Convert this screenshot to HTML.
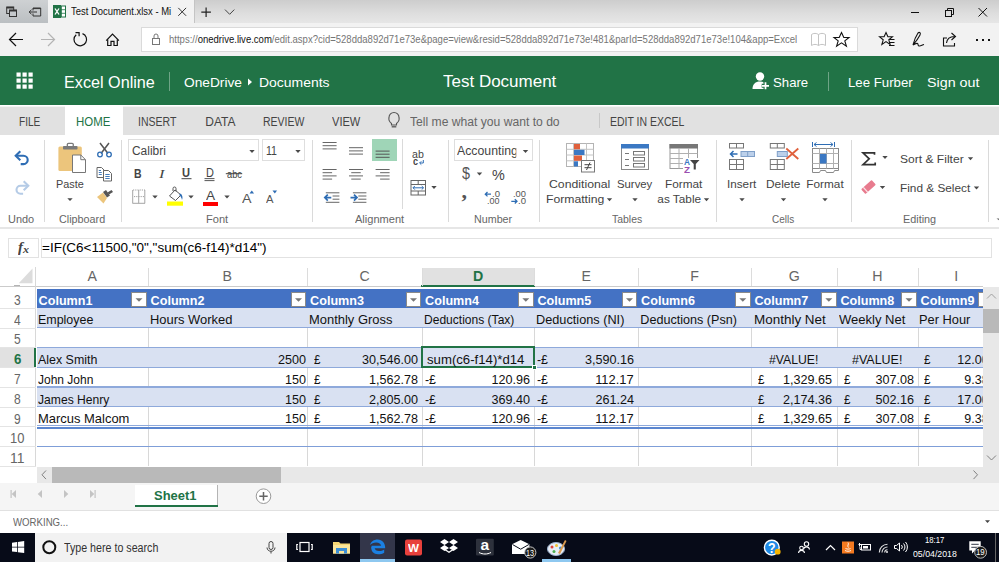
<!DOCTYPE html>
<html lang="en"><head><meta charset="utf-8"><title>Test Document.xlsx - Microsoft Excel Online</title>
<style>
html,body{margin:0;padding:0;background:#fff;}
body{width:999px;height:562px;overflow:hidden;position:relative;font-family:"Liberation Sans", "DejaVu Sans", sans-serif;}
#page{position:absolute;left:0;top:0;width:999px;height:562px;overflow:hidden;}
.b{position:absolute;box-sizing:border-box;}
.t{position:absolute;white-space:nowrap;line-height:1;transform-origin:0 0;display:block;}
svg.ov{position:absolute;left:0;top:0;width:999px;height:562px;overflow:visible;pointer-events:none;}
</style></head><body><div id="page">
<div class="b tabbar" style="left:0px;top:0px;width:999px;height:23.2px;background:linear-gradient(180deg,#cdcdcd,#dedede 60%,#e6e6e6);"></div>
<div class="b " style="left:0px;top:0px;width:47.5px;height:23.2px;background:linear-gradient(180deg,#ced1d3,#bbbfc2);"></div>
<div class="b tab" style="left:47.5px;top:0px;width:146px;height:23.2px;background:#f2f2f2;"></div>
<div class="b " style="left:193.5px;top:0px;width:1px;height:23.2px;background:#c4c4c4;"></div>
<div class="b navbar" style="left:0px;top:23px;width:999px;height:34px;background:#f2f2f2;"></div>
<div class="b urlbox" style="left:141px;top:27px;width:717px;height:25px;background:#fff;border:1px solid #dadada;"></div>
<div class="b appbar" style="left:0px;top:56.4px;width:999px;height:49.1px;background:#217346;"></div>
<div class="b " style="left:169.2px;top:72px;width:1px;height:19px;background:rgba(255,255,255,.35);"></div>
<div class="b " style="left:827.5px;top:72px;width:1px;height:19px;background:rgba(255,255,255,.35);"></div>
<div class="b " style="left:0px;top:105.5px;width:999px;height:1.5px;background:#f4f4f4;"></div>
<div class="b ribbontabs" style="left:0px;top:107px;width:999px;height:28px;background:#e1e1e1;"></div>
<div class="b hometab" style="left:65px;top:105.5px;width:58px;height:30px;background:#fff;"></div>
<div class="b " style="left:599px;top:113px;width:1px;height:15px;background:#c8c8c8;"></div>
<div class="b ribbon" style="left:0px;top:135px;width:999px;height:92px;background:#fff;"></div>
<div class="b " style="left:0px;top:227px;width:999px;height:5px;background:#fff;"></div>
<div class="b " style="left:0px;top:227.3px;width:999px;height:1.4px;background:#e6e6e6;"></div>
<div class="b " style="left:44px;top:140px;width:1px;height:82px;background:#dadada;"></div>
<div class="b " style="left:121px;top:140px;width:1px;height:82px;background:#dadada;"></div>
<div class="b " style="left:312px;top:140px;width:1px;height:82px;background:#dadada;"></div>
<div class="b " style="left:448px;top:140px;width:1px;height:82px;background:#dadada;"></div>
<div class="b " style="left:539px;top:140px;width:1px;height:82px;background:#dadada;"></div>
<div class="b " style="left:716px;top:140px;width:1px;height:82px;background:#dadada;"></div>
<div class="b " style="left:851px;top:140px;width:1px;height:82px;background:#dadada;"></div>
<div class="b " style="left:988px;top:140px;width:1px;height:82px;background:#dadada;"></div>
<div class="b " style="left:402px;top:139px;width:1px;height:70px;background:#dadada;"></div>
<div class="b " style="left:128px;top:139px;width:131px;height:22px;background:#fff;border:1px solid #dedede;"></div>
<div class="b " style="left:262px;top:139px;width:43px;height:22px;background:#fff;border:1px solid #dedede;"></div>
<div class="b " style="left:202.7px;top:201.7px;width:15.3px;height:4px;background:#ff0000;"></div>
<div class="b " style="left:372px;top:139px;width:25px;height:22px;background:#9fd5b7;"></div>
<div class="b " style="left:454px;top:139px;width:79px;height:22px;background:#fff;border:1px solid #dedede;overflow:hidden;"></div>
<div class="b " style="left:0px;top:232px;width:999px;height:35px;background:#fff;"></div>
<div class="b " style="left:8px;top:238px;width:31px;height:19.6px;background:#fff;border:1px solid #e2e2e2;"></div>
<div class="b " style="left:41px;top:238px;width:951px;height:19.6px;background:#fff;border:1px solid #e2e2e2;"></div>
<div class="b grid" style="left:0px;top:267px;width:983px;height:200px;background:#fff;"></div>
<div class="b " style="left:422px;top:267.8px;width:112.3px;height:18.2px;background:#e1e1e1;"></div>
<div class="b " style="left:0px;top:286px;width:983px;height:1px;background:#cbcbcb;"></div>
<div class="b " style="left:421px;top:285px;width:114px;height:2px;background:#217346;"></div>
<div class="b " style="left:148px;top:267.8px;width:1px;height:18.2px;background:#dcdcdc;"></div>
<div class="b " style="left:307px;top:267.8px;width:1px;height:18.2px;background:#dcdcdc;"></div>
<div class="b " style="left:422px;top:267.8px;width:1px;height:18.2px;background:#dcdcdc;"></div>
<div class="b " style="left:534px;top:267.8px;width:1px;height:18.2px;background:#dcdcdc;"></div>
<div class="b " style="left:638px;top:267.8px;width:1px;height:18.2px;background:#dcdcdc;"></div>
<div class="b " style="left:751px;top:267.8px;width:1px;height:18.2px;background:#dcdcdc;"></div>
<div class="b " style="left:837px;top:267.8px;width:1px;height:18.2px;background:#dcdcdc;"></div>
<div class="b " style="left:918px;top:267.8px;width:1px;height:18.2px;background:#dcdcdc;"></div>
<div class="b " style="left:35px;top:267px;width:1px;height:200px;background:#d8d8d8;"></div>
<div class="b " style="left:14px;top:284.6px;width:5.5px;height:1px;background:#b4b4b4;"></div>
<div class="b " style="left:37px;top:288.5px;width:946px;height:19.69999999999999px;background:#4472c4;"></div>
<div class="b " style="left:37px;top:308.2px;width:946px;height:19.80000000000001px;background:#d9e1f2;"></div>
<div class="b " style="left:37px;top:347.7px;width:946px;height:19.69999999999999px;background:#d9e1f2;"></div>
<div class="b " style="left:37px;top:387.2px;width:946px;height:19.80000000000001px;background:#d9e1f2;"></div>
<div class="b " style="left:147.5px;top:328px;width:1px;height:19.69999999999999px;background:#d8d8d8;"></div>
<div class="b " style="left:306.5px;top:328px;width:1px;height:19.69999999999999px;background:#d8d8d8;"></div>
<div class="b " style="left:421.5px;top:328px;width:1px;height:19.69999999999999px;background:#d8d8d8;"></div>
<div class="b " style="left:533.5px;top:328px;width:1px;height:19.69999999999999px;background:#d8d8d8;"></div>
<div class="b " style="left:637.5px;top:328px;width:1px;height:19.69999999999999px;background:#d8d8d8;"></div>
<div class="b " style="left:750.5px;top:328px;width:1px;height:19.69999999999999px;background:#d8d8d8;"></div>
<div class="b " style="left:836.5px;top:328px;width:1px;height:19.69999999999999px;background:#d8d8d8;"></div>
<div class="b " style="left:917.5px;top:328px;width:1px;height:19.69999999999999px;background:#d8d8d8;"></div>
<div class="b " style="left:147.5px;top:367.4px;width:1px;height:19.80000000000001px;background:#d8d8d8;"></div>
<div class="b " style="left:306.5px;top:367.4px;width:1px;height:19.80000000000001px;background:#d8d8d8;"></div>
<div class="b " style="left:421.5px;top:367.4px;width:1px;height:19.80000000000001px;background:#d8d8d8;"></div>
<div class="b " style="left:533.5px;top:367.4px;width:1px;height:19.80000000000001px;background:#d8d8d8;"></div>
<div class="b " style="left:637.5px;top:367.4px;width:1px;height:19.80000000000001px;background:#d8d8d8;"></div>
<div class="b " style="left:750.5px;top:367.4px;width:1px;height:19.80000000000001px;background:#d8d8d8;"></div>
<div class="b " style="left:836.5px;top:367.4px;width:1px;height:19.80000000000001px;background:#d8d8d8;"></div>
<div class="b " style="left:917.5px;top:367.4px;width:1px;height:19.80000000000001px;background:#d8d8d8;"></div>
<div class="b " style="left:147.5px;top:407px;width:1px;height:19.80000000000001px;background:#d8d8d8;"></div>
<div class="b " style="left:306.5px;top:407px;width:1px;height:19.80000000000001px;background:#d8d8d8;"></div>
<div class="b " style="left:421.5px;top:407px;width:1px;height:19.80000000000001px;background:#d8d8d8;"></div>
<div class="b " style="left:533.5px;top:407px;width:1px;height:19.80000000000001px;background:#d8d8d8;"></div>
<div class="b " style="left:637.5px;top:407px;width:1px;height:19.80000000000001px;background:#d8d8d8;"></div>
<div class="b " style="left:750.5px;top:407px;width:1px;height:19.80000000000001px;background:#d8d8d8;"></div>
<div class="b " style="left:836.5px;top:407px;width:1px;height:19.80000000000001px;background:#d8d8d8;"></div>
<div class="b " style="left:917.5px;top:407px;width:1px;height:19.80000000000001px;background:#d8d8d8;"></div>
<div class="b " style="left:147.5px;top:426.8px;width:1px;height:19.69999999999999px;background:#d8d8d8;"></div>
<div class="b " style="left:306.5px;top:426.8px;width:1px;height:19.69999999999999px;background:#d8d8d8;"></div>
<div class="b " style="left:421.5px;top:426.8px;width:1px;height:19.69999999999999px;background:#d8d8d8;"></div>
<div class="b " style="left:533.5px;top:426.8px;width:1px;height:19.69999999999999px;background:#d8d8d8;"></div>
<div class="b " style="left:637.5px;top:426.8px;width:1px;height:19.69999999999999px;background:#d8d8d8;"></div>
<div class="b " style="left:750.5px;top:426.8px;width:1px;height:19.69999999999999px;background:#d8d8d8;"></div>
<div class="b " style="left:836.5px;top:426.8px;width:1px;height:19.69999999999999px;background:#d8d8d8;"></div>
<div class="b " style="left:917.5px;top:426.8px;width:1px;height:19.69999999999999px;background:#d8d8d8;"></div>
<div class="b " style="left:147.5px;top:446.5px;width:1px;height:19.80000000000001px;background:#d8d8d8;"></div>
<div class="b " style="left:306.5px;top:446.5px;width:1px;height:19.80000000000001px;background:#d8d8d8;"></div>
<div class="b " style="left:421.5px;top:446.5px;width:1px;height:19.80000000000001px;background:#d8d8d8;"></div>
<div class="b " style="left:533.5px;top:446.5px;width:1px;height:19.80000000000001px;background:#d8d8d8;"></div>
<div class="b " style="left:637.5px;top:446.5px;width:1px;height:19.80000000000001px;background:#d8d8d8;"></div>
<div class="b " style="left:750.5px;top:446.5px;width:1px;height:19.80000000000001px;background:#d8d8d8;"></div>
<div class="b " style="left:836.5px;top:446.5px;width:1px;height:19.80000000000001px;background:#d8d8d8;"></div>
<div class="b " style="left:917.5px;top:446.5px;width:1px;height:19.80000000000001px;background:#d8d8d8;"></div>
<div class="b " style="left:37px;top:327.2px;width:946px;height:1.3px;background:#8ea9db;"></div>
<div class="b " style="left:37px;top:346.9px;width:946px;height:1.3px;background:#8ea9db;"></div>
<div class="b " style="left:37px;top:366.59999999999997px;width:946px;height:1.3px;background:#8ea9db;"></div>
<div class="b " style="left:37px;top:386.4px;width:946px;height:1.3px;background:#8ea9db;"></div>
<div class="b " style="left:37px;top:406.2px;width:946px;height:1.3px;background:#8ea9db;"></div>
<div class="b " style="left:37px;top:425.40000000000003px;width:946px;height:1px;background:#8ea9db;"></div>
<div class="b " style="left:37px;top:427.0px;width:946px;height:1.5px;background:#5b86cf;"></div>
<div class="b " style="left:37px;top:445.9px;width:946px;height:1.5px;background:#7f9ed8;"></div>
<div class="b " style="left:0px;top:347.7px;width:35.5px;height:19.69999999999999px;background:#e1e1e1;"></div>
<div class="b " style="left:34.4px;top:347.7px;width:2px;height:19.69999999999999px;background:#217346;"></div>
<div class="b " style="left:0px;top:307.7px;width:35.5px;height:1px;background:#e4e4e4;"></div>
<div class="b " style="left:0px;top:327.5px;width:35.5px;height:1px;background:#e4e4e4;"></div>
<div class="b " style="left:0px;top:347.2px;width:35.5px;height:1px;background:#e4e4e4;"></div>
<div class="b " style="left:0px;top:366.9px;width:35.5px;height:1px;background:#e4e4e4;"></div>
<div class="b " style="left:0px;top:386.7px;width:35.5px;height:1px;background:#e4e4e4;"></div>
<div class="b " style="left:0px;top:406.5px;width:35.5px;height:1px;background:#e4e4e4;"></div>
<div class="b " style="left:0px;top:426.3px;width:35.5px;height:1px;background:#e4e4e4;"></div>
<div class="b " style="left:0px;top:446.0px;width:35.5px;height:1px;background:#e4e4e4;"></div>
<div class="b " style="left:0px;top:465.8px;width:35.5px;height:1px;background:#e4e4e4;"></div>
<div class="b " style="left:131.2px;top:291.6px;width:15.6px;height:15.8px;background:#fff;border:1px solid #8a8a8a;"></div>
<div class="b " style="left:290.7px;top:291.6px;width:15.6px;height:15.8px;background:#fff;border:1px solid #8a8a8a;"></div>
<div class="b " style="left:405.7px;top:291.6px;width:15.6px;height:15.8px;background:#fff;border:1px solid #8a8a8a;"></div>
<div class="b " style="left:518.0px;top:291.6px;width:15.6px;height:15.8px;background:#fff;border:1px solid #8a8a8a;"></div>
<div class="b " style="left:621.7px;top:291.6px;width:15.6px;height:15.8px;background:#fff;border:1px solid #8a8a8a;"></div>
<div class="b " style="left:735.0px;top:291.6px;width:15.6px;height:15.8px;background:#fff;border:1px solid #8a8a8a;"></div>
<div class="b " style="left:821.0px;top:291.6px;width:15.6px;height:15.8px;background:#fff;border:1px solid #8a8a8a;"></div>
<div class="b " style="left:901.2px;top:291.6px;width:15.6px;height:15.8px;background:#fff;border:1px solid #8a8a8a;"></div>
<div class="b " style="left:978px;top:291.6px;width:5px;height:15.8px;background:#fff;border:1px solid #8a8a8a;border-right:none;"></div>
<div class="b " style="left:421px;top:346.2px;width:114.3px;height:22.099999999999987px;border:2px solid #217346;"></div>
<div class="b " style="left:532px;top:365.4px;width:5px;height:5px;background:#217346;border:1px solid #fff;"></div>
<div class="b " style="left:983px;top:286.8px;width:16px;height:180.2px;background:#e8e8e8;"></div>
<div class="b " style="left:983px;top:309px;width:16px;height:23.6px;background:#b9b9b9;"></div>
<div class="b " style="left:983px;top:267px;width:16px;height:20px;background:#fff;"></div>
<div class="b " style="left:0px;top:467px;width:999px;height:16px;background:#fff;"></div>
<div class="b " style="left:37px;top:467px;width:946px;height:15.7px;background:#e8e8e8;"></div>
<div class="b " style="left:52px;top:467px;width:229px;height:15.7px;background:#b9b9b9;"></div>
<div class="b " style="left:983px;top:467px;width:16px;height:15.7px;background:#e8e8e8;"></div>
<div class="b sheettabs" style="left:0px;top:482.7px;width:999px;height:28px;background:#f5f5f5;"></div>
<div class="b " style="left:0px;top:510px;width:999px;height:1px;background:#e1e1e1;"></div>
<div class="b " style="left:135px;top:485px;width:83px;height:22px;background:#fff;border-right:1px solid #b4b4b4;"></div>
<div class="b " style="left:135px;top:504.5px;width:83px;height:2.5px;background:#217346;"></div>
<div class="b status" style="left:0px;top:511px;width:999px;height:22px;background:#fff;"></div>
<div class="b taskbar" style="left:0px;top:532.8px;width:999px;height:29.2px;background:#070b18;"></div>
<div class="b " style="left:35px;top:532.8px;width:251.5px;height:29.2px;background:#f2f2f2;"></div>
<div class="b " style="left:360px;top:532.9px;width:35px;height:29.1px;background:#33364a;"></div>
<div class="b " style="left:360px;top:559.4px;width:35px;height:2.6px;background:#8ec8f0;"></div>
<div class="b " style="left:542px;top:559.4px;width:29px;height:2.6px;background:#8ec8f0;"></div>
<div class="b " style="left:995.3px;top:532.8px;width:1px;height:29.2px;background:#666;"></div>
<svg class="ov" viewBox="0 0 999 562" width="999" height="562">
<g fill="none" stroke="#333" stroke-width="1"><rect x="6.700" y="7" width="7" height="6.500"/><path d="M6.700 7.700h7" stroke-width="1.600"/><rect x="9.500" y="10" width="7" height="6.500" fill="#c4c8cb"/><path d="M9.500 10.700h7" stroke-width="1.600"/><path d="M33 10.500v-2.500h7.700v8h-7.700v-2.500M33 8.600h7.700" /><path d="M29 12h8M31.500 9.800l-2.400 2.200l2.400 2.200"/></g>
<g><rect x="58" y="6" width="7.5" height="11" fill="#fff" stroke="#217346" stroke-width="1"/><path d="M61.5 6v11M58 9.7h7.5M58 13.3h7.5" stroke="#217346" stroke-width=".8"/><rect x="53" y="5" width="8" height="13" fill="#217346"/><path d="M55 8.5l4 6M59 8.5l-4 6" stroke="#fff" stroke-width="1.3"/></g>
<path d="M178.300 7.900l7.800 7.900M186.100 7.900l-7.800 7.900" stroke="#333" stroke-width="1" fill="none"/>
<path d="M206.100 7.500v9.400M201.300 12.200h9.600" stroke="#222" stroke-width="1.200" fill="none"/>
<path d="M225 9.600l4.650 4.700l4.650-4.700" stroke="#444" stroke-width="1" fill="none"/>
<g stroke="#111" stroke-width="1" fill="none"><path d="M911 12.5h8"/><rect x="945.5" y="10.5" width="6" height="6"/><path d="M947.5 10.5v-2h6v6h-2"/><path d="M978.500 8l8.500 8.500M987 8l-8.500 8.500"/></g>
<g stroke="#111" stroke-width="1.2" fill="none"><path d="M23 39.500h-13.500M16 33l-6.500 6.500l6.500 6.500"/></g>
<g stroke="#b4b4b4" stroke-width="1.2" fill="none"><path d="M41 39.500h13.500M48 33l6.500 6.500l-6.500 6.500"/></g>
<g stroke="#111" stroke-width="1.2" fill="none"><path d="M82.500 33.600A6.300 6.300 0 1 1 76.200 34.700"/><path d="M75.500 32.700h3.600v3.600" /></g>
<g stroke="#111" stroke-width="1.2" fill="none"><path d="M106.200 40.700L112.500 34L118.900 40.700"/><path d="M107.700 39.500V45.500H111V41.300H114V45.500H117.300V39.500"/></g>
<g stroke="#777" stroke-width="1" fill="none"><rect x="152.500" y="38.500" width="7" height="6"/><path d="M154 38.500v-2.500a2 2 0 0 1 4 0v2.500"/></g>
<g stroke="#c4c4c4" stroke-width="1" fill="none"><path d="M818.500 34.500v11M818.500 34.500c-2-1.500-5-1.500-7 0v11c2-1.500 5-1.500 7 0c2-1.500 5-1.500 7 0v-11c-2-1.500-5-1.500-7 0"/></g>
<path d="M841.500 32.500l2.300 5h5.200l-4.200 3.400l1.600 5.300l-4.900-3.300l-4.900 3.300l1.600-5.300l-4.200-3.400h5.200z" stroke="#111" stroke-width="1.1" fill="none"/>
<g stroke="#111" stroke-width="1.1" fill="none"><path d="M886 32.500l1.900 4.300h4.500l-3.600 3l1.300 4.600l-4.100-2.800l-4.100 2.800l1.300-4.600l-3.600-3h4.500z"/><path d="M889 39.500h5.500M889 42.500h5.500M889 45.500h5.500" /></g>
<g stroke="#111" stroke-width="1.1" fill="none"><path d="M913 45c1-4 3-9 5-12c1.500-1.500 3 0 2 2c-1.500 3-4 6.500-7 10c2-1 3.500-2 4.500-1.500s0 2 1.500 2.500s3-1 5-1.500"/></g>
<g stroke="#111" stroke-width="1.1" fill="none"><path d="M947 38h-3.500v8h11v-3"/><path d="M946.500 43c.5-4 3.500-6.500 8-6.500M951.500 33l4 3.500l-4 3.500"/></g>
<g fill="#111"><rect x="976" y="39" width="2" height="2"/><rect x="982" y="39" width="2" height="2"/><rect x="988" y="39" width="2" height="2"/></g>
<g fill="#fff"><rect x="16.5" y="72.5" width="4.200" height="4.200"/><rect x="16.5" y="78.5" width="4.200" height="4.200"/><rect x="16.5" y="84.5" width="4.200" height="4.200"/><rect x="22.5" y="72.5" width="4.200" height="4.200"/><rect x="22.5" y="78.5" width="4.200" height="4.200"/><rect x="22.5" y="84.5" width="4.200" height="4.200"/><rect x="28.5" y="72.5" width="4.200" height="4.200"/><rect x="28.5" y="78.5" width="4.200" height="4.200"/><rect x="28.5" y="84.5" width="4.200" height="4.200"/></g>
<path d="M248 78.500l4 3.500l-4 3.500z" fill="#fff"/>
<g fill="#fff"><circle cx="760" cy="76.500" r="4.200"/><path d="M752.500 89c0-5 3-7.500 7.500-7.500c2 0 3.500.5 4.500 1.500v6z"/></g><g stroke="#217346" stroke-width="4" fill="none"><path d="M765.500 82v7.500M761.700 85.700h7.600"/></g><g stroke="#fff" stroke-width="1.700" fill="none"><path d="M765.500 82.300v7M762 85.800h7"/></g>
<g stroke="#555" stroke-width="1.1" fill="none"><path d="M391.500 123.500c-2.500-2-3-4-2.500-6a5 5 0 0 1 10 0c.5 2 0 4-2.500 6v1.500h-5z"/><path d="M391.700 126.800h4.600" stroke-width="1.300"/></g>
<g stroke="#2e6db4" stroke-width="2.100" fill="none"><path d="M17 155.700h6.500a4.200 4.200 0 0 1 0 8.400h-2.800"/><path d="M20.300 151.200l-4.600 4.500l4.600 4.500" stroke-linejoin="miter"/></g>
<g stroke="#b5cbe6" stroke-width="2.100" fill="none"><path d="M27 185.700h-6.500a4 4 0 0 0 0 8h2.600"/><path d="M23.700 181.200l4.600 4.500l-4.600 4.500"/></g>
<g><rect x="58.400" y="146.500" width="23.400" height="24.500" rx="1.500" fill="#ecc57c"/><rect x="63" y="146" width="14.500" height="3.500" rx=".8" fill="#7a7a7a"/><rect x="67.300" y="143.300" width="6" height="3.500" rx="1.200" fill="none" stroke="#7a7a7a" stroke-width="1.300"/><path d="M72.500 155h8.300l4.700 4.700v12.800h-13z" fill="#fff" stroke="#777" stroke-width="1"/><path d="M80.800 155v4.700h4.700" fill="none" stroke="#777" stroke-width="1"/></g>
<path d="M67.300 198.150h5.4l-2.700 2.9z" fill="#4a4a4a"/>
<g fill="none"><path d="M100 143l8 10.500M109 143l-8 10.500" stroke="#555" stroke-width="1.500"/><circle cx="100" cy="154.500" r="2.300" stroke="#2e6db4" stroke-width="1.300"/><circle cx="109" cy="154.500" r="2.300" stroke="#2e6db4" stroke-width="1.300"/></g>
<g fill="#fff" stroke="#666" stroke-width="1"><path d="M97 167.500h4.500l2.500 2.500v7.500h-7z"/><path d="M103.500 170.500h5l3 3v7.500h-8z"/></g><path d="M105.300 174.500h4.400M105.300 176.500h4.400M105.300 178.500h4.400M98.800 170.500h2.200M98.800 172.500h3M98.800 174.500h3" stroke="#2e6db4" stroke-width=".9"/>
<g><path d="M97 197l6-4.500l4 5.500l-3.500 5.500z" fill="#ecc57c"/><path d="M103 192l3-2l4 5.500l-3 2z" fill="#555"/><path d="M107.500 192.500l4-2.500l1.500 2l-4 2.500z" fill="#555"/></g>
<path d="M249.300 150.050h5.4l-2.700 2.9z" fill="#4a4a4a"/>
<path d="M295.300 150.050h5.4l-2.700 2.9z" fill="#4a4a4a"/>
<path d="M181.500 178.700h10" stroke="#444" stroke-width="1"/>
<path d="M204.500 178.600h10M204.500 180.600h10" stroke="#444" stroke-width=".9"/>
<path d="M225.800 173.700h16.400" stroke="#444" stroke-width="1"/>
<g fill="none"><path d="M132.500 203.300h12.500M132.700 190v13.300M144.800 190v13.300M138.700 190v13.300" stroke="#a6a6a6" stroke-width="1"/><path d="M133 190h12M134 196.600h10" stroke="#a0a0a0" stroke-width="1" stroke-dasharray="1.200 1"/></g>
<path d="M152.300 195.550h5.4l-2.700 2.9z" fill="#4a4a4a"/>
<g><rect x="167" y="201.500" width="16" height="4.200" fill="#ffff00"/><path d="M169.500 196l5.500-6l6 5l-5.500 5.500z" fill="#fff" stroke="#555" stroke-width="1"/><path d="M173 191v-2.500a1.500 1.500 0 0 1 3 0v3" fill="none" stroke="#555" stroke-width="1"/><path d="M180.500 193.500c2 1.500 2.500 4 1.500 6.500c-.5-2.500-1.500-4-3-5z" fill="#2e6db4"/></g>
<path d="M188.300 195.550h5.4l-2.700 2.9z" fill="#4a4a4a"/>
<path d="M224.300 195.550h5.4l-2.700 2.9z" fill="#4a4a4a"/>
<path d="M249.500 193.500l2.300-3l2.300 3z" fill="#2e6db4"/>
<path d="M272.500 190.500h4.600l-2.300 3z" fill="#2e6db4"/>
<path d="M322.60 142.50h14 M322.60 145.70h14 M322.60 148.90h14" stroke="#666" stroke-width="1" fill="none"/>
<path d="M349.00 147.70h14 M349.00 150.90h14 M349.00 154.10h14" stroke="#666" stroke-width="1" fill="none"/>
<path d="M375.60 151.10h14 M375.60 154.20h14 M375.60 157.30h14" stroke="#555" stroke-width="1" fill="none"/>
<path d="M322.60 169.50h14 M322.60 172.70h9.5 M322.60 175.90h14 M322.60 179.10h9.5" stroke="#666" stroke-width="1" fill="none"/>
<path d="M349.00 169.50h14 M351.25 172.70h9.5 M349.00 175.90h14 M351.25 179.10h9.5" stroke="#666" stroke-width="1" fill="none"/>
<path d="M375.60 169.50h14 M380.10 172.70h9.5 M375.60 175.90h14 M380.10 179.10h9.5" stroke="#666" stroke-width="1" fill="none"/>
<path d="M325.80 192.80h13.6 M332.60 196.00h6.8 M332.60 199.20h6.8 M325.80 202.30h13.6" stroke="#666" stroke-width="1" fill="none"/>
<g stroke="#2e6db4" stroke-width="1.700" fill="none"><path d="M324.800 197.600h6.500M327.800 194.600l-3 3l3 3"/></g>
<path d="M352.90 192.80h13.5 M358.30 196.00h8.1 M358.30 199.20h8.1 M352.90 202.30h13.5" stroke="#666" stroke-width="1" fill="none"/>
<g stroke="#2e6db4" stroke-width="1.700" fill="none"><path d="M350.500 197.600h6.500M354 194.600l3 3l-3 3"/></g>
<path d="M423.300 160v3h-3.500M421.300 161.300l-1.700 1.700l1.700 1.700" stroke="#2e6db4" stroke-width="1" fill="none"/>
<g fill="none" stroke="#666" stroke-width="1"><rect x="411" y="180.500" width="14.500" height="14.500" fill="#fff"/><path d="M411 184.500h14.500M411 191h14.500M418.200 180.500v4M418.200 191v4"/></g><path d="M413 187.800h10.500M414.800 186l-1.800 1.800l1.800 1.800M421.700 186l1.800 1.800l-1.800 1.800" stroke="#2e6db4" stroke-width="1" fill="none"/>
<path d="M431.300 186.050h5.4l-2.700 2.9z" fill="#4a4a4a"/>
<path d="M522.800 150.050h5.4l-2.700 2.9z" fill="#4a4a4a"/>
<path d="M476.800 172.550h5.4l-2.700 2.9z" fill="#4a4a4a"/>
<path d="M485.300 194.200h5.700M487.500 192l-2.200 2.200l2.200 2.200" stroke="#2e6db4" stroke-width="1.300" fill="none"/>
<path d="M511.300 201.300h5.700M514.800 199.100l2.200 2.200l-2.200 2.200" stroke="#2e6db4" stroke-width="1.300" fill="none"/>
<g><rect x="566.500" y="143.500" width="27" height="23" fill="#fff" stroke="#b4b4b4" stroke-width="1"/><path d="M566.500 149.300h27M566.500 155h27M566.500 160.800h27M573.500 143.500v23M586.500 143.500v23" stroke="#c4c4c4" stroke-width="1" fill="none"/><rect x="574" y="144" width="6" height="5.300" fill="#e0603c"/><rect x="574" y="149.800" width="10.500" height="5.200" fill="#3b78c3"/><rect x="574" y="155.500" width="8" height="5.300" fill="#e0603c"/><rect x="574" y="161.300" width="4" height="5.200" fill="#3b78c3"/><rect x="581.500" y="160.500" width="13" height="11.500" fill="#fff" stroke="#777" stroke-width="1"/><path d="M584.500 164.700h7M584.500 167.700h7M590 162.500l-3.500 7.500" stroke="#444" stroke-width="1" fill="none"/></g>
<path d="M606.800 198.350h5.4l-2.700 2.9z" fill="#4a4a4a"/>
<g><rect x="621.500" y="144.500" width="27" height="25" fill="#fff" stroke="#8a8a8a" stroke-width="1"/><rect x="621" y="144" width="28" height="4.500" fill="#3b78c3"/><path d="M625 153.500h4M625 159.500h4M625 165.500h4" stroke="#777" stroke-width="1"/><g fill="none" stroke="#777" stroke-width="1"><rect x="633.500" y="151.500" width="11" height="3.500"/><rect x="633.500" y="157.500" width="11" height="3.500"/><rect x="633.500" y="163.500" width="11" height="3.500"/></g></g>
<path d="M632.300 198.350h5.4l-2.700 2.9z" fill="#4a4a4a"/>
<g><rect x="670" y="144.500" width="27.500" height="24" fill="#fff" stroke="#9a9a9a" stroke-width="1"/><rect x="669.500" y="144" width="28.500" height="4.500" fill="#777"/><path d="M670 153.500h27.500M670 158.500h27.500M670 163.500h27.500M679 148v20.500M688.500 148v20.500" stroke="#b0b0b0" stroke-width="1" fill="none"/><rect x="683" y="158" width="16" height="15" fill="#fff"/><path d="M690 160h9.500l-3.700 4v5.500h-2.100v-5.500z" fill="#444"/></g>
<path d="M703.800 198.350h5.4l-2.700 2.9z" fill="#4a4a4a"/>
<g fill="#fff" stroke="#777" stroke-width="1"><rect x="729.500" y="143.500" width="14" height="4.500"/><path d="M736.500 143.500v4.500"/><rect x="729.500" y="159.500" width="14" height="10"/><path d="M736.500 159.500v10M729.500 164.500h14"/></g><rect x="741" y="151.500" width="13.500" height="5" fill="#bcd0ea" stroke="#7f9fc8" stroke-width="1"/><path d="M747.700 151.500v5" stroke="#7f9fc8" stroke-width="1"/><path d="M730.500 154h7M733.500 151l-3 3l3 3" stroke="#2e6db4" stroke-width="1.500" fill="none"/>
<path d="M739.300 198.350h5.4l-2.700 2.9z" fill="#4a4a4a"/>
<g transform="translate(0.8 0)"><g fill="#fff" stroke="#777" stroke-width="1"><rect x="769.500" y="143.500" width="14" height="4.500"/><path d="M776.500 143.500v4.500"/><rect x="769.500" y="159.500" width="14" height="10"/><path d="M776.500 159.500v10M769.500 164.500h14"/></g><rect x="776.500" y="151.500" width="10" height="5" fill="#bcd0ea" stroke="#7f9fc8" stroke-width="1"/><path d="M785.500 148.500l12 10.500M797.500 148.500l-12 10.500" stroke="#e0603c" stroke-width="1.800" fill="none"/></g>
<path d="M780.800 198.350h5.4l-2.700 2.9z" fill="#4a4a4a"/>
<g><rect x="812.500" y="148.500" width="26" height="20" fill="#fff" stroke="#8a8a8a" stroke-width="1"/><path d="M812.500 153.500h26M812.500 163.500h26M819.500 148.500v20M826.500 148.500v20M833.500 148.500v20" stroke="#b0b0b0" stroke-width="1" fill="none"/><rect x="820" y="154" width="6.500" height="9.500" fill="#3b78c3"/><path d="M812.500 168.500v4h7l1-2h5l1 2h0M826.500 172.500h7l1-2h4v-2" stroke="#8a8a8a" stroke-width="1" fill="none"/><path d="M812.500 142v5M834.500 142v5M814 144.500h19M816.500 142.500l-2.500 2l2.500 2M830.500 142.500l2.500 2l-2.500 2" stroke="#2e6db4" stroke-width="1" fill="none"/></g>
<path d="M822.300 198.350h5.4l-2.700 2.9z" fill="#4a4a4a"/>
<path d="M874.500 154.800v-2h-11.500l6.200 6l-6.200 5.800h12.200v-2" stroke="#333" stroke-width="1.700" fill="none"/>
<path d="M882.300 156.050h5.4l-2.700 2.9z" fill="#4a4a4a"/>
<path d="M967.800 157.350h5.4l-2.700 2.9z" fill="#4a4a4a"/>
<g transform="rotate(-42 868.500 187)"><rect x="861.500" y="183.800" width="14" height="6.400" rx=".8" fill="#e87b8e"/><rect x="863.800" y="183.800" width="1.300" height="6.400" fill="#fbe3e7"/></g>
<path d="M879.800 186.050h5.4l-2.700 2.9z" fill="#4a4a4a"/>
<path d="M973.800 186.550h5.4l-2.700 2.9z" fill="#4a4a4a"/>
<path d="M996.500 218.500h3v2z" fill="#666"/>
<path d="M18.700 283.200l13.800-14.600v14.600z" fill="#dcdcdc"/>
<path d="M135.50 298.200h7l-3.500 3.600z" fill="#777"/>
<path d="M295.00 298.200h7l-3.500 3.600z" fill="#777"/>
<path d="M410.00 298.200h7l-3.500 3.600z" fill="#777"/>
<path d="M522.30 298.200h7l-3.500 3.600z" fill="#777"/>
<path d="M626.00 298.200h7l-3.500 3.600z" fill="#777"/>
<path d="M739.30 298.200h7l-3.500 3.600z" fill="#777"/>
<path d="M825.30 298.200h7l-3.500 3.600z" fill="#777"/>
<path d="M905.50 298.200h7l-3.500 3.600z" fill="#777"/>
<path d="M987 298.500l4.500-4.500l4.500 4.500" stroke="#a0a0a0" stroke-width="1" fill="none"/>
<path d="M987 455.500l4.500 4.500l4.500-4.500" stroke="#808080" stroke-width="1" fill="none"/>
<path d="M46 470.500l-4 4.300l4 4.300" stroke="#808080" stroke-width="1" fill="none"/>
<path d="M973.500 470.500l4 4.300l-4 4.300" stroke="#808080" stroke-width="1" fill="none"/>
<g fill="#c4c4c4"><rect x="10.500" y="490" width="1.200" height="8"/><path d="M16 490v8l-4.300-4z"/><path d="M42 490v8l-4.300-4z"/><path d="M64 490v8l4.300-4z"/><path d="M90 490v8l4.300-4z"/><rect x="94.500" y="490" width="1.200" height="8"/></g>
<g fill="none"><circle cx="263.500" cy="496.200" r="7.300" stroke-width="1" stroke="#999" fill="#fff"/><path d="M259.300 496.200h8.400M263.500 492v8.400" stroke-width="1.500" stroke="#666"/></g>
<path d="M985 520.300h5l-2.500 2.800z" fill="#444"/>
<g fill="#fff"><path d="M12 542.800l5-.7v4.600h-5zM17.800 542l6.400-.9v5.600h-6.400zM12 547.500h5v4.600l-5-.7zM17.800 547.500h6.400v5.600l-6.400-.9z"/></g>
<circle cx="49.300" cy="547.300" r="6" stroke="#111" stroke-width="2" fill="none"/>
<g stroke="#444" stroke-width="1" fill="none"><rect x="269" y="541.500" width="4" height="8" rx="2"/><path d="M267 547.500c0 5 8 5 8 0M271 551.500v2"/></g>
<g stroke="#fff" stroke-width="1.200" fill="none"><rect x="300" y="542.500" width="9" height="9"/><path d="M298 544.500h-1.200v5h1.200M311 544.500h1.200v5h-1.200"/></g>
<g><path d="M333 542h6l1.500 1.500h9.500v10h-17z" fill="#f7d774"/><rect x="333" y="545" width="17" height="8.500" fill="#fbe69b"/><rect x="336" y="548" width="11" height="5.500" fill="#3c8fd6"/><rect x="339" y="551" width="5" height="2.500" fill="#fbe69b"/></g>
<g fill="#1b80e2"><path d="M371.300 548.300h13.900c.2-5.200-2.900-8.900-7.600-8.900c-3.700 0-6.700 2.100-7.700 5.700c1.600-1.700 3.700-2.700 6.200-2.700c3 0 4.700 1.400 5 3.400h-9.500z"/><path d="M371.300 547.300c-.3 4 2.400 6.900 6.700 6.900c2.500 0 4.600-.5 6.200-1.500v-3.100c-1.600 1-3.200 1.500-5.200 1.500c-2.600 0-4.200-1.300-4.400-3.300z"/></g>
<rect x="405" y="539.500" width="17" height="16" rx="2" fill="#e8413c"/>
<g fill="#fff"><path d="M444.500 539l4.500 3l-4.500 3l-4.500-3zM453.500 539l4.500 3l-4.500 3l-4.500-3zM444.500 545l4.500 3l-4.500 3l-4.500-3zM453.500 545l4.500 3l-4.500 3l-4.500-3zM449 551.500l4.500-3v1.500l-4.500 3l-4.500-3v-1.500z"/></g>
<rect x="476" y="538.800" width="17.800" height="16.800" rx="1" fill="#2d313c"/><path d="M479 552.500c4 2 8 2 12 0" stroke="#fff" stroke-width="1" fill="none"/>
<g><path d="M512 544.300l8.700-4.300l8.700 4.300v9.700h-17.400z" fill="#fff"/><path d="M512.500 544.500l8.200 4.700l8.200-4.700" stroke="#070b18" stroke-width="1" fill="none"/><circle cx="530.300" cy="552.500" r="5.600" fill="#1c1c1c" stroke="#c8c8c8" stroke-width="1"/></g>
<g><ellipse cx="556" cy="549" rx="8.500" ry="6.500" fill="#e8eef6" stroke="#9fb6d4" stroke-width="1"/><circle cx="552" cy="547" r="1.500" fill="#e0443c"/><circle cx="556.500" cy="545.500" r="1.500" fill="#f1c232"/><circle cx="560.500" cy="548" r="1.500" fill="#3c8fd6"/><circle cx="554" cy="551.500" r="1.500" fill="#4caf50"/><path d="M558 553l7-13l1.500 1l-6.500 13z" fill="#d99a4e"/></g>
<g><circle cx="771.800" cy="547.600" r="7.400" fill="#1e8ae6" stroke="#fff" stroke-width="1.400"/><circle cx="777.700" cy="551.700" r="2.900" fill="#f5b400"/></g>
<g stroke="#fff" stroke-width="1.100" fill="none"><circle cx="806.500" cy="544" r="2.200"/><path d="M803.500 549.500c.5-3.500 5.500-3.500 6 0"/><circle cx="801.500" cy="548" r="1.800"/><path d="M798.500 553c.5-3.500 5.500-3.500 6 0"/></g>
<path d="M826 550l4.500-4.500l4.500 4.500" stroke="#fff" stroke-width="1.200" fill="none"/>
<rect x="842" y="541.500" width="12" height="12" fill="#f47a20"/><path d="M845 550.500c2 1 4 1 6 0M845.500 548.500c2 .8 3.500.8 5 0M848 542.500c1.500 2-1.500 3 .5 5" stroke="#fff" stroke-width=".9" fill="none"/>
<g stroke="#fff" stroke-width="1" fill="none"><rect x="861.500" y="544.500" width="9" height="5.500"/><rect x="863" y="546" width="5" height="2.500" fill="#fff" stroke="none"/><path d="M859.500 543v3.500M858.500 544.500h3M860 547v2.500h1.500"/></g>
<g stroke="#ededed" stroke-width="1.100" fill="none"><path d="M884.700 552.500a2.800 2.800 0 0 1 2.800-2.800M882 552.500a5.500 5.500 0 0 1 5.500-5.500M879.300 552.500a8.200 8.200 0 0 1 8.200-8.200" opacity=".95"/><circle cx="887" cy="552" r=".9" fill="#fff" stroke="none"/></g>
<g stroke="#fff" stroke-width="1" fill="none"><path d="M894.500 545.500h2l3-2.500v8l-3-2.500h-2z"/><path d="M901.500 545a3 3 0 0 1 0 4M903.500 543.500a5 5 0 0 1 0 7M905.500 542a7.500 7.500 0 0 1 0 10"/></g>
<g><path d="M969.300 541.300h11.400v9.200h-5.700l-3 3v-3h-2.700z" fill="#fff"/><path d="M971.300 544.300h7.400M971.300 547.300h7.400" stroke="#5a5f6b" stroke-width="1.200"/><circle cx="980.600" cy="552.300" r="5.900" fill="#1c1c1c" stroke="#bdbdbd" stroke-width="1"/></g>
</svg>
<span class="t" style="top:7.00px;font-size:10.1px;color:#111;left:71.44px;transform:scaleX(0.9344);">Test Document.xlsx - Mi</span>
<span class="t" style="top:34.00px;font-size:11px;color:#767676;left:169.40px;transform:scaleX(0.8671);"><span style="color:#767676">https://</span><span style="color:#111">onedrive.live.com</span><span style="color:#767676">/edit.aspx?cid=528dda892d71e73e&amp;page=view&amp;resid=528dda892d71e73e!481&amp;parId=528dda892d71e73e!104&amp;app=Excel</span></span>
<span class="t" style="top:75.00px;font-size:16.8px;color:#fff;left:64.08px;transform:scaleX(0.9642);">Excel Online</span>
<span class="t" style="top:76.00px;font-size:13.6px;color:#fff;left:184.25px;transform:scaleX(1.0100);">OneDrive</span>
<span class="t" style="top:76.00px;font-size:13.6px;color:#fff;left:259.25px;transform:scaleX(1.0252);">Documents</span>
<span class="t" style="top:74.00px;font-size:16.8px;color:#fff;left:443.08px;transform:scaleX(1.0127);">Test Document</span>
<span class="t" style="top:76.00px;font-size:13.6px;color:#fff;left:772.55px;transform:scaleX(0.9701);">Share</span>
<span class="t" style="top:76.00px;font-size:13.6px;color:#fff;left:848.05px;transform:scaleX(0.9729);">Lee Furber</span>
<span class="t" style="top:76.00px;font-size:13.6px;color:#fff;left:927.25px;transform:scaleX(1.0522);">Sign out</span>
<span class="t" style="top:116.00px;font-size:12px;color:#444;left:19.34px;transform:scaleX(0.8412);">FILE</span>
<span class="t" style="top:116.00px;font-size:12px;color:#217346;left:76.34px;transform:scaleX(0.9533);">HOME</span>
<span class="t" style="top:116.00px;font-size:12px;color:#444;left:138.34px;transform:scaleX(0.8749);">INSERT</span>
<span class="t" style="top:116.00px;font-size:12px;color:#444;left:205.34px;">DATA</span>
<span class="t" style="top:116.00px;font-size:12px;color:#444;left:263.34px;transform:scaleX(0.8728);">REVIEW</span>
<span class="t" style="top:116.00px;font-size:12px;color:#444;left:332.34px;transform:scaleX(0.9233);">VIEW</span>
<span class="t" style="top:116.00px;font-size:12px;color:#444;left:610.34px;transform:scaleX(0.8729);">EDIT IN EXCEL</span>
<span class="t" style="top:116.00px;font-size:12px;color:#666;left:409.74px;transform:scaleX(1.0104);">Tell me what you want to do</span>
<span class="t" style="top:214.00px;font-size:10.6px;color:#666;left:8.42px;transform:scaleX(1.0331);">Undo</span>
<span class="t" style="top:214.00px;font-size:10.6px;color:#666;left:59.42px;transform:scaleX(1.0178);">Clipboard</span>
<span class="t" style="top:214.00px;font-size:10.6px;color:#666;left:205.82px;transform:scaleX(1.0454);">Font</span>
<span class="t" style="top:214.00px;font-size:10.6px;color:#666;left:355.42px;transform:scaleX(1.0437);">Alignment</span>
<span class="t" style="top:214.00px;font-size:10.6px;color:#666;left:474.42px;transform:scaleX(1.0127);">Number</span>
<span class="t" style="top:214.00px;font-size:10.6px;color:#666;left:612.42px;transform:scaleX(0.9850);">Tables</span>
<span class="t" style="top:214.00px;font-size:10.6px;color:#666;left:772.42px;transform:scaleX(0.9414);">Cells</span>
<span class="t" style="top:214.00px;font-size:10.6px;color:#666;left:903.42px;transform:scaleX(1.0234);">Editing</span>
<span class="t" style="top:179.00px;font-size:11.8px;color:#444;left:55.85px;transform:scaleX(0.9213);">Paste</span>
<span class="t" style="top:145.00px;font-size:12px;color:#444;left:131.84px;transform:scaleX(0.9942);">Calibri</span>
<span class="t" style="top:145.00px;font-size:12px;color:#444;left:266.00px;transform:scaleX(0.8822);">11</span>
<span class="t" style="top:168.00px;font-size:12.6px;color:#444;font-weight:700;left:134.40px;transform:scaleX(0.8343);">B</span>
<span class="t" style="top:167.00px;font-size:13px;color:#444;font-family:'Liberation Serif', 'DejaVu Serif', serif;font-style:italic;left:159.00px;transform:scaleX(1.2662);">I</span>
<span class="t" style="top:167.00px;font-size:12px;color:#444;font-weight:700;left:182.40px;transform:scaleX(0.9225);">U</span>
<span class="t" style="top:167.00px;font-size:12px;color:#444;left:205.60px;transform:scaleX(0.9110);">D</span>
<span class="t" style="top:169.00px;font-size:11px;color:#444;left:226.50px;transform:scaleX(0.8451);">abc</span>
<span class="t" style="top:190.00px;font-size:12.6px;color:#444;left:205.80px;transform:scaleX(1.0825);">A</span>
<span class="t" style="top:192.00px;font-size:13.5px;color:#555;left:241.50px;transform:scaleX(1.0537);">A</span>
<span class="t" style="top:194.00px;font-size:11.5px;color:#555;left:265.50px;transform:scaleX(0.9776);">A</span>
<span class="t" style="top:149.00px;font-size:11.5px;color:#444;left:412.20px;transform:scaleX(0.9221);">ab</span>
<span class="t" style="top:156.00px;font-size:11.5px;color:#444;font-weight:700;left:412.60px;transform:scaleX(0.7805);">c</span>
<span class="t" style="top:145.00px;font-size:12px;color:#444;left:457.34px;transform:scaleX(1.0243);clip-path:inset(-5px 1.5px -5px 0);">Accounting</span>
<span class="t" style="top:165.00px;font-size:17px;color:#555;left:461.50px;transform:scaleX(0.8449);">$</span>
<span class="t" style="top:167.00px;font-size:15px;color:#444;left:491.80px;transform:scaleX(0.9593);">%</span>
<span class="t" style="top:180.00px;font-size:22px;color:#555;font-weight:700;font-family:'Liberation Serif', 'DejaVu Serif', serif;left:461.50px;">,</span>
<span class="t" style="top:190.00px;font-size:8.5px;color:#555;left:491.50px;transform:scaleX(1.1278);">.0</span>
<span class="t" style="top:197.00px;font-size:8.5px;color:#555;left:487.00px;transform:scaleX(1.0568);">.00</span>
<span class="t" style="top:190.00px;font-size:8.5px;color:#555;left:512.50px;transform:scaleX(1.0991);">.00</span>
<span class="t" style="top:197.00px;font-size:8.5px;color:#555;left:517.50px;transform:scaleX(1.1278);">.0</span>
<span class="t" style="top:179.00px;font-size:11.8px;color:#444;left:548.95px;transform:scaleX(1.0384);">Conditional</span>
<span class="t" style="top:194.00px;font-size:11.8px;color:#444;left:546.35px;transform:scaleX(1.0338);">Formatting</span>
<span class="t" style="top:179.00px;font-size:11.8px;color:#444;left:617.35px;transform:scaleX(0.9613);">Survey</span>
<span class="t" style="top:158.00px;font-size:8.5px;color:#3b78c3;font-weight:700;left:684.00px;transform:scaleX(0.9771);">A</span>
<span class="t" style="top:166.00px;font-size:8.5px;color:#9b4fb0;font-weight:700;left:684.00px;transform:scaleX(1.1532);">Z</span>
<span class="t" style="top:179.00px;font-size:11.8px;color:#444;left:664.95px;">Format</span>
<span class="t" style="top:194.00px;font-size:11.8px;color:#444;left:657.35px;">as Table</span>
<span class="t" style="top:179.00px;font-size:11.8px;color:#444;left:727.35px;transform:scaleX(0.9926);">Insert</span>
<span class="t" style="top:179.00px;font-size:11.8px;color:#444;left:766.35px;transform:scaleX(1.0055);">Delete</span>
<span class="t" style="top:179.00px;font-size:11.8px;color:#444;left:806.35px;">Format</span>
<span class="t" style="top:154.00px;font-size:11.5px;color:#444;left:899.97px;transform:scaleX(1.0485);">Sort &amp; Filter</span>
<span class="t" style="top:183.00px;font-size:11.5px;color:#444;left:899.97px;transform:scaleX(1.0272);">Find &amp; Select</span>
<span class="t" style="top:241.00px;font-size:14px;color:#444;font-weight:700;font-family:'Liberation Serif', 'DejaVu Serif', serif;font-style:italic;left:17.50px;transform:scaleX(1.0702);">f</span>
<span class="t" style="top:245.00px;font-size:10px;color:#444;font-weight:700;font-family:'Liberation Serif', 'DejaVu Serif', serif;font-style:italic;left:22.50px;transform:scaleX(1.2000);">x</span>
<span class="t" style="top:241.00px;font-size:13.2px;color:#000;left:42.27px;transform:scaleX(1.0234);">=IF(C6&lt;11500,&quot;0&quot;,&quot;sum(c6-f14)*d14&quot;)</span>
<span class="t" style="top:269.00px;font-size:14.2px;color:#666;left:42.25px;width:100px;text-align:center;transform-origin:50% 0;">A</span>
<span class="t" style="top:269.00px;font-size:14.2px;color:#666;left:177.25px;width:100px;text-align:center;transform-origin:50% 0;">B</span>
<span class="t" style="top:269.00px;font-size:14.2px;color:#666;left:314.50px;width:100px;text-align:center;transform-origin:50% 0;">C</span>
<span class="t" style="top:269.00px;font-size:14.2px;color:#217346;font-weight:700;left:428.15px;width:100px;text-align:center;transform-origin:50% 0;">D</span>
<span class="t" style="top:269.00px;font-size:14.2px;color:#666;left:536.15px;width:100px;text-align:center;transform-origin:50% 0;">E</span>
<span class="t" style="top:269.00px;font-size:14.2px;color:#666;left:644.65px;width:100px;text-align:center;transform-origin:50% 0;">F</span>
<span class="t" style="top:269.00px;font-size:14.2px;color:#666;left:744.30px;width:100px;text-align:center;transform-origin:50% 0;">G</span>
<span class="t" style="top:269.00px;font-size:14.2px;color:#666;left:827.40px;width:100px;text-align:center;transform-origin:50% 0;">H</span>
<span class="t" style="top:269.00px;font-size:14.2px;color:#666;left:906.30px;width:100px;text-align:center;transform-origin:50% 0;">I</span>
<span class="t" style="top:293.00px;font-size:14.2px;color:#666;left:13.85px;transform:scaleX(0.8491);">3</span>
<span class="t" style="top:313.00px;font-size:14.2px;color:#666;left:13.85px;transform:scaleX(0.8491);">4</span>
<span class="t" style="top:332.00px;font-size:14.2px;color:#666;left:13.85px;transform:scaleX(0.8491);">5</span>
<span class="t" style="top:352.00px;font-size:14.2px;color:#217346;font-weight:700;left:13.50px;transform:scaleX(0.9378);">6</span>
<span class="t" style="top:372.00px;font-size:14.2px;color:#666;left:13.85px;transform:scaleX(0.8491);">7</span>
<span class="t" style="top:392.00px;font-size:14.2px;color:#666;left:13.85px;transform:scaleX(0.8491);">8</span>
<span class="t" style="top:412.00px;font-size:14.2px;color:#666;left:13.85px;transform:scaleX(0.8491);">9</span>
<span class="t" style="top:431.00px;font-size:14.2px;color:#666;left:10.00px;transform:scaleX(0.9125);">10</span>
<span class="t" style="top:451.00px;font-size:14.2px;color:#666;left:10.00px;transform:scaleX(0.9773);">11</span>
<span class="t" style="top:295.00px;font-size:12.6px;color:#fff;font-weight:700;left:38.61px;">Column1</span>
<span class="t" style="top:295.00px;font-size:12.6px;color:#fff;font-weight:700;left:150.61px;">Column2</span>
<span class="t" style="top:295.00px;font-size:12.6px;color:#fff;font-weight:700;left:310.11px;">Column3</span>
<span class="t" style="top:295.00px;font-size:12.6px;color:#fff;font-weight:700;left:425.11px;">Column4</span>
<span class="t" style="top:295.00px;font-size:12.6px;color:#fff;font-weight:700;left:537.41px;">Column5</span>
<span class="t" style="top:295.00px;font-size:12.6px;color:#fff;font-weight:700;left:641.11px;">Column6</span>
<span class="t" style="top:295.00px;font-size:12.6px;color:#fff;font-weight:700;left:754.41px;">Column7</span>
<span class="t" style="top:295.00px;font-size:12.6px;color:#fff;font-weight:700;left:840.41px;">Column8</span>
<span class="t" style="top:295.00px;font-size:12.6px;color:#fff;font-weight:700;left:920.61px;">Column9</span>
<span class="t" style="top:314.00px;font-size:12.6px;color:#111;left:38.31px;transform:scaleX(0.9888);">Employee</span>
<span class="t" style="top:314.00px;font-size:12.6px;color:#111;left:150.31px;transform:scaleX(1.0264);">Hours Worked</span>
<span class="t" style="top:314.00px;font-size:12.6px;color:#111;left:309.31px;transform:scaleX(1.0271);">Monthly Gross</span>
<span class="t" style="top:314.00px;font-size:12.6px;color:#111;left:424.31px;transform:scaleX(0.9565);">Deductions (Tax)</span>
<span class="t" style="top:314.00px;font-size:12.6px;color:#111;left:536.31px;transform:scaleX(1.0101);">Deductions (NI)</span>
<span class="t" style="top:314.00px;font-size:12.6px;color:#111;left:640.31px;">Deductions (Psn)</span>
<span class="t" style="top:314.00px;font-size:12.6px;color:#111;left:753.91px;transform:scaleX(1.0682);">Monthly Net</span>
<span class="t" style="top:314.00px;font-size:12.6px;color:#111;left:839.31px;transform:scaleX(1.0348);">Weekly Net</span>
<span class="t" style="top:314.00px;font-size:12.6px;color:#111;left:919.31px;transform:scaleX(1.0194);">Per Hour</span>
<span class="t" style="top:354.00px;font-size:12.6px;color:#111;left:38.31px;transform:scaleX(0.9864);">Alex Smith</span>
<span class="t" style="top:374.00px;font-size:12.6px;color:#111;left:38.31px;transform:scaleX(0.9529);">John John</span>
<span class="t" style="top:394.00px;font-size:12.6px;color:#111;left:38.31px;transform:scaleX(0.9622);">James Henry</span>
<span class="t" style="top:413.00px;font-size:12.6px;color:#111;left:38.31px;transform:scaleX(1.0283);">Marcus Malcom</span>
<span class="t" style="top:354.00px;font-size:12.6px;color:#111;right:693.10px;transform-origin:100% 0;">2500</span>
<span class="t" style="top:354.00px;font-size:12.6px;color:#111;left:313.50px;transform:scaleX(0.9265);">£</span>
<span class="t" style="top:354.00px;font-size:12.6px;color:#111;right:581.10px;transform-origin:100% 0;">30,546.00</span>
<span class="t" style="top:354.00px;font-size:12.6px;color:#111;left:427.31px;transform:scaleX(1.0459);">sum(c6-f14)*d14</span>
<span class="t" style="top:354.00px;font-size:12.6px;color:#111;left:537.00px;transform:scaleX(0.9819);">-£</span>
<span class="t" style="top:354.00px;font-size:12.6px;color:#111;right:365.10px;transform-origin:100% 0;">3,590.16</span>
<span class="t" style="top:354.00px;font-size:12.6px;color:#111;left:769.31px;transform:scaleX(0.9707);">#VALUE!</span>
<span class="t" style="top:354.00px;font-size:12.6px;color:#111;left:852.31px;transform:scaleX(0.9904);">#VALUE!</span>
<span class="t" style="top:374.00px;font-size:12.6px;color:#111;right:693.10px;transform-origin:100% 0;">150</span>
<span class="t" style="top:374.00px;font-size:12.6px;color:#111;left:313.50px;transform:scaleX(0.9265);">£</span>
<span class="t" style="top:374.00px;font-size:12.6px;color:#111;right:581.10px;transform-origin:100% 0;">1,562.78</span>
<span class="t" style="top:374.00px;font-size:12.6px;color:#111;left:425.00px;transform:scaleX(0.9819);">-£</span>
<span class="t" style="top:374.00px;font-size:12.6px;color:#111;right:469.10px;transform-origin:100% 0;">120.96</span>
<span class="t" style="top:374.00px;font-size:12.6px;color:#111;left:537.00px;transform:scaleX(0.9819);">-£</span>
<span class="t" style="top:374.00px;font-size:12.6px;color:#111;right:365.10px;transform-origin:100% 0;transform:scaleX(1.0228);">112.17</span>
<span class="t" style="top:374.00px;font-size:12.6px;color:#111;left:758.00px;transform:scaleX(0.9265);">£</span>
<span class="t" style="top:374.00px;font-size:12.6px;color:#111;right:167.10px;transform-origin:100% 0;">1,329.65</span>
<span class="t" style="top:374.00px;font-size:12.6px;color:#111;left:843.50px;transform:scaleX(0.9265);">£</span>
<span class="t" style="top:374.00px;font-size:12.6px;color:#111;right:85.10px;transform-origin:100% 0;">307.08</span>
<span class="t" style="top:394.00px;font-size:12.6px;color:#111;right:693.10px;transform-origin:100% 0;">150</span>
<span class="t" style="top:394.00px;font-size:12.6px;color:#111;left:313.50px;transform:scaleX(0.9265);">£</span>
<span class="t" style="top:394.00px;font-size:12.6px;color:#111;right:581.10px;transform-origin:100% 0;">2,805.00</span>
<span class="t" style="top:394.00px;font-size:12.6px;color:#111;left:425.00px;transform:scaleX(0.9819);">-£</span>
<span class="t" style="top:394.00px;font-size:12.6px;color:#111;right:469.10px;transform-origin:100% 0;">369.40</span>
<span class="t" style="top:394.00px;font-size:12.6px;color:#111;left:537.00px;transform:scaleX(0.9819);">-£</span>
<span class="t" style="top:394.00px;font-size:12.6px;color:#111;right:365.10px;transform-origin:100% 0;">261.24</span>
<span class="t" style="top:394.00px;font-size:12.6px;color:#111;left:758.00px;transform:scaleX(0.9265);">£</span>
<span class="t" style="top:394.00px;font-size:12.6px;color:#111;right:167.10px;transform-origin:100% 0;">2,174.36</span>
<span class="t" style="top:394.00px;font-size:12.6px;color:#111;left:843.50px;transform:scaleX(0.9265);">£</span>
<span class="t" style="top:394.00px;font-size:12.6px;color:#111;right:85.10px;transform-origin:100% 0;">502.16</span>
<span class="t" style="top:413.00px;font-size:12.6px;color:#111;right:693.10px;transform-origin:100% 0;">150</span>
<span class="t" style="top:413.00px;font-size:12.6px;color:#111;left:313.50px;transform:scaleX(0.9265);">£</span>
<span class="t" style="top:413.00px;font-size:12.6px;color:#111;right:581.10px;transform-origin:100% 0;">1,562.78</span>
<span class="t" style="top:413.00px;font-size:12.6px;color:#111;left:425.00px;transform:scaleX(0.9819);">-£</span>
<span class="t" style="top:413.00px;font-size:12.6px;color:#111;right:469.10px;transform-origin:100% 0;">120.96</span>
<span class="t" style="top:413.00px;font-size:12.6px;color:#111;left:537.00px;transform:scaleX(0.9819);">-£</span>
<span class="t" style="top:413.00px;font-size:12.6px;color:#111;right:365.10px;transform-origin:100% 0;transform:scaleX(1.0228);">112.17</span>
<span class="t" style="top:413.00px;font-size:12.6px;color:#111;left:758.00px;transform:scaleX(0.9265);">£</span>
<span class="t" style="top:413.00px;font-size:12.6px;color:#111;right:167.10px;transform-origin:100% 0;">1,329.65</span>
<span class="t" style="top:413.00px;font-size:12.6px;color:#111;left:843.50px;transform:scaleX(0.9265);">£</span>
<span class="t" style="top:413.00px;font-size:12.6px;color:#111;right:85.10px;transform-origin:100% 0;">307.08</span>
<span class="t" style="top:354.00px;font-size:12.6px;color:#111;left:923.50px;transform:scaleX(0.9265);">£</span>
<span class="t" style="top:374.00px;font-size:12.6px;color:#111;left:923.50px;transform:scaleX(0.9265);">£</span>
<span class="t" style="top:394.00px;font-size:12.6px;color:#111;left:923.50px;transform:scaleX(0.9265);">£</span>
<span class="t" style="top:413.00px;font-size:12.6px;color:#111;left:923.50px;transform:scaleX(0.9265);">£</span>
<span class="t" style="top:354.00px;font-size:12.6px;color:#111;right:10.00px;transform-origin:100% 0;transform:scaleX(0.9890);clip-path:inset(-3px 6px -3px -3px);">12.00</span>
<span class="t" style="top:374.00px;font-size:12.6px;color:#111;right:10.00px;transform-origin:100% 0;transform:scaleX(0.9888);clip-path:inset(-3px 6px -3px -3px);">9.38</span>
<span class="t" style="top:394.00px;font-size:12.6px;color:#111;right:10.00px;transform-origin:100% 0;transform:scaleX(0.9890);clip-path:inset(-3px 6px -3px -3px);">17.00</span>
<span class="t" style="top:413.00px;font-size:12.6px;color:#111;right:10.00px;transform-origin:100% 0;transform:scaleX(0.9888);clip-path:inset(-3px 6px -3px -3px);">9.38</span>
<span class="t" style="top:489.00px;font-size:13.5px;color:#217346;font-weight:700;left:154.26px;transform:scaleX(0.9594);">Sheet1</span>
<span class="t" style="top:517.00px;font-size:10.5px;color:#666;left:13.42px;transform:scaleX(0.9178);">WORKING...</span>
<span class="t" style="top:542.00px;font-size:12.3px;color:#333;left:64.32px;transform:scaleX(0.8681);">Type here to search</span>
<span class="t" style="top:543.00px;font-size:10.5px;color:#fff;font-weight:700;left:408.00px;transform:scaleX(1.1087);">W</span>
<span class="t" style="top:537.00px;font-size:15.5px;color:#fff;font-weight:700;left:480.50px;">a</span>
<span class="t" style="top:549.00px;font-size:8.4px;color:#fff;left:526.30px;transform:scaleX(0.8576);">13</span>
<span class="t" style="top:541.00px;font-size:14px;color:#fff;font-weight:700;left:768.00px;transform:scaleX(0.8876);">?</span>
<span class="t" style="top:536.00px;font-size:8.8px;color:#fff;left:924.72px;transform:scaleX(0.8797);">18:17</span>
<span class="t" style="top:550.00px;font-size:8.8px;color:#fff;left:913.02px;transform:scaleX(0.9940);">05/04/2018</span>
<span class="t" style="top:548.00px;font-size:8.6px;color:#fff;left:976.30px;transform:scaleX(0.9098);">19</span>
</div></body></html>
